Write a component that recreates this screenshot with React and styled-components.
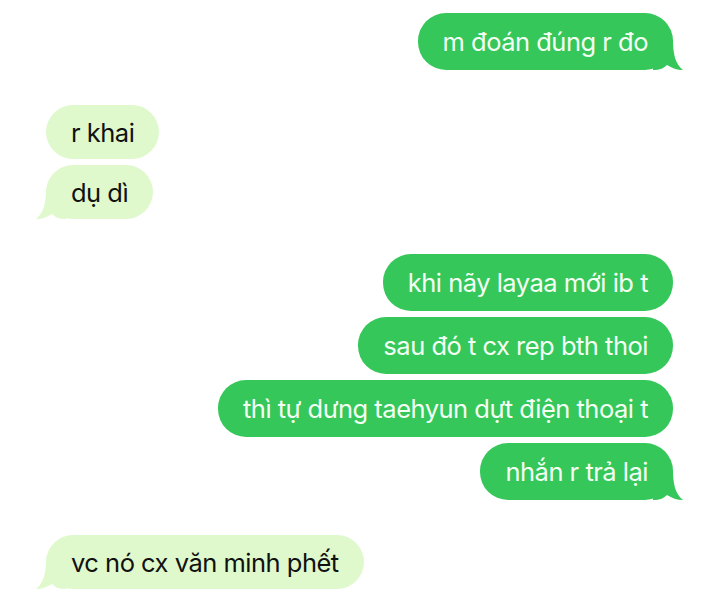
import styled, { createGlobalStyle } from 'styled-components';

const GlobalStyle = createGlobalStyle`
	html, body {
		margin: 0;
		padding: 0;
		background: #ffffff;
	}
	body {
		font-family: Inter, "Noto Sans", sans-serif;
	}
`;

const Thread = styled.div`
	width: 720px;
	height: 598px;
	box-sizing: border-box;
	padding: 13px 47px 0 46px;
	display: flex;
	flex-direction: column;
	gap: 35px;
	overflow: hidden;
`;

const Group = styled.div`
	display: flex;
	flex-direction: column;
	align-items: ${(p) => (p.$me ? 'flex-end' : 'flex-start')};
	gap: 6px;
`;

const Bubble = styled.div`
	position: relative;
	height: ${(p) => (p.$me ? '57px' : '54px')};
	box-sizing: border-box;
	padding: 0 25px;
	display: flex;
	align-items: center;
	border-radius: 28px;
	font-size: 25.5px;
	letter-spacing: -0.5px;
	white-space: nowrap;
	background: ${(p) => (p.$me ? '#35c759' : '#dff9cc')};
	color: ${(p) => (p.$me ? '#f4fff4' : '#111111')};
`;

const Tail = styled.svg`
	position: absolute;
	bottom: 0;
	width: 30px;
	height: 30px;
	${(p) => (p.$me ? 'right: -10px;' : 'left: -10px; transform: scaleX(-1);')}
	fill: ${(p) => (p.$me ? '#35c759' : '#dff9cc')};
`;

const TailShape = ({ me }) => (
	<Tail $me={me} viewBox="0 0 30 30">
		<path d="M0 0 H20 C20 13 22 24 30 30 C24 30 19 28 14 25 C11 28 7 30 0 30 Z" />
	</Tail>
);

const groups = [
	{ me: true, lines: ['m đoán đúng r đo'] },
	{ me: false, lines: ['r khai', 'dụ dì'] },
	{
		me: true,
		lines: [
			'khi nãy layaa mới ib t',
			'sau đó t cx rep bth thoi',
			'thì tự dưng taehyun dựt điện thoại t',
			'nhắn r trả lại'
		]
	},
	{ me: false, lines: ['vc nó cx văn minh phết'] }
];

const App = () => {
	return (
		<>
			<GlobalStyle />
			<Thread>
				{groups.map((g, gi) => (
					<Group key={gi} $me={g.me}>
						{g.lines.map((text, i) => (
							<Bubble key={i} $me={g.me}>
								{text}
								{i === g.lines.length - 1 && <TailShape me={g.me} />}
							</Bubble>
						))}
					</Group>
				))}
			</Thread>
		</>
	);
};

export default App;
